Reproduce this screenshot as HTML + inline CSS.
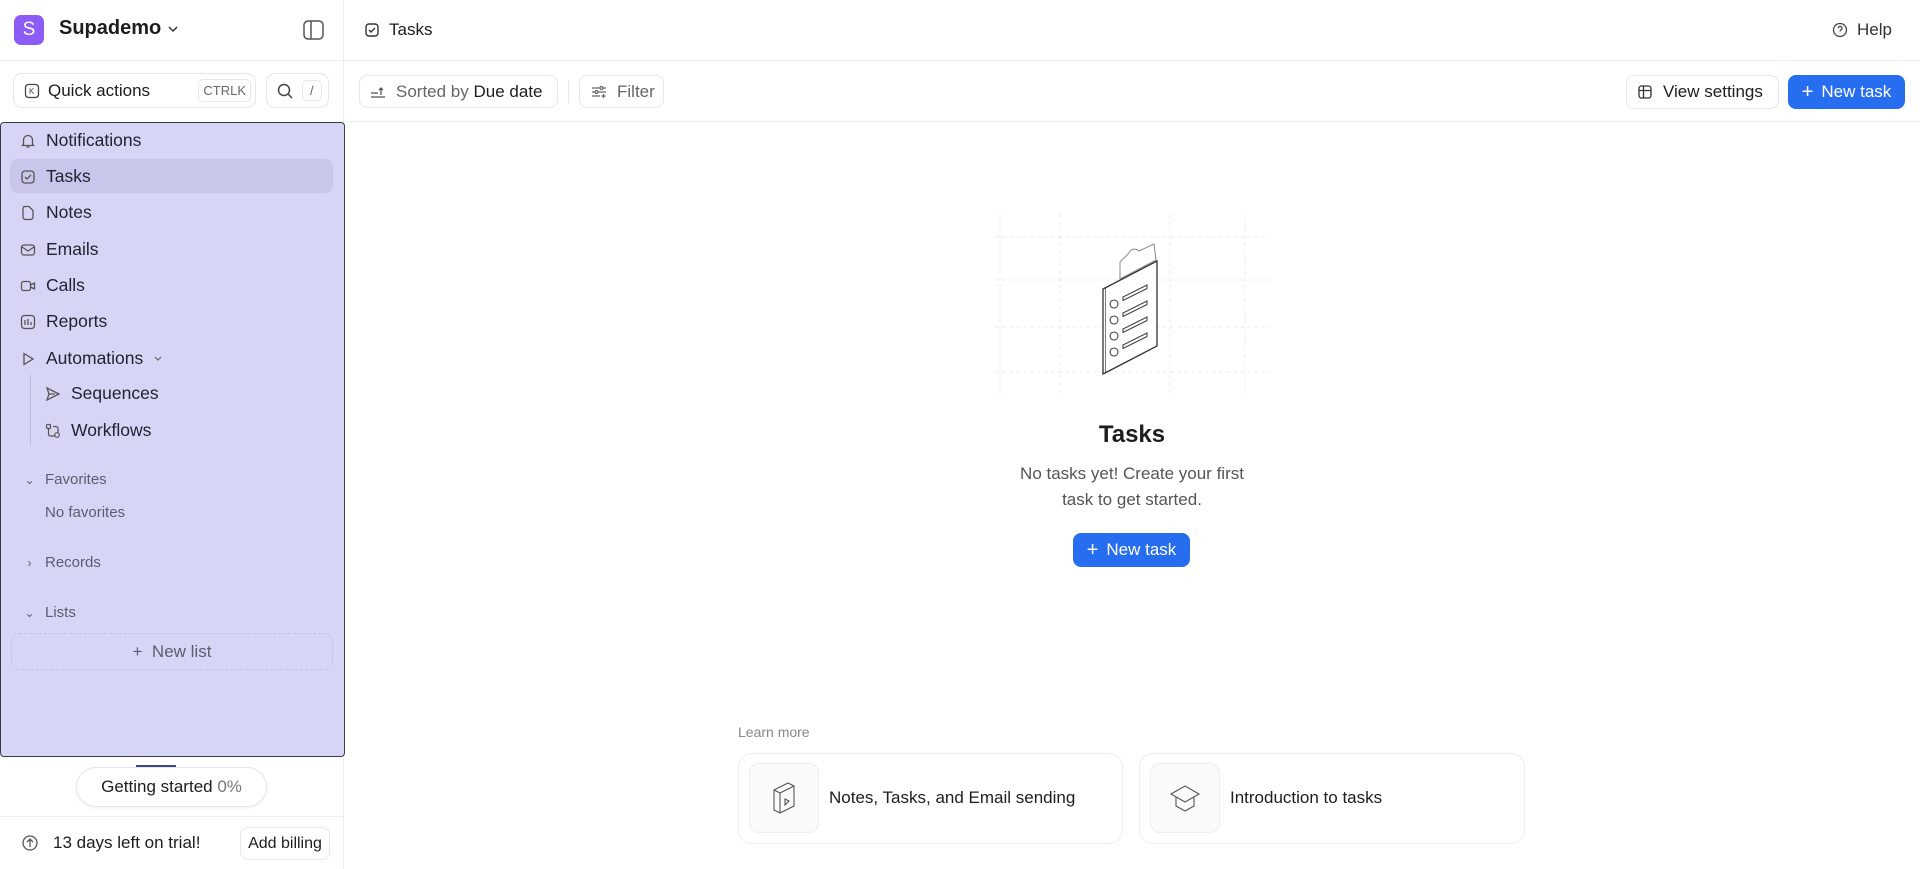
<!DOCTYPE html>
<html><head><meta charset="utf-8"><style>
*{box-sizing:border-box;margin:0;padding:0}
body{width:1920px;height:869px;overflow:hidden;background:#fff;font-family:"Liberation Sans",sans-serif;color:#1c1d1f;position:relative}
.a{position:absolute}
svg{display:block}
.nav{position:absolute;left:20px;font-size:17.5px;color:#1f2230;display:flex;align-items:center;gap:10px}
.sec{position:absolute;left:22px;font-size:15px;color:#5b5e70;display:flex;align-items:center;gap:8px}
.sec i{font-style:normal;width:15px;text-align:center;font-size:12px}
.btn{position:absolute;border:1px solid #e6e7ea;border-radius:8px;display:flex;align-items:center;gap:8px;font-size:17px}
</style></head><body>
<div class="a" style="left:0;top:0;width:344px;height:869px;border-right:1px solid #ececee;background:#fff"></div>
<div class="a" style="left:0;top:60px;width:344px;height:1px;background:#efeff1"></div>
<div class="a" style="left:14px;top:15px;width:30px;height:30px;border-radius:7px;background:#8b5cf6;color:#fff;font-size:19px;text-align:center;line-height:30px">S</div>
<div class="a" style="left:59px;top:17px;font-size:20px;font-weight:bold;color:#1c1d1f">Supademo</div>
<svg class="a" style="left:167px;top:25px" width="12" height="8" viewBox="0 0 12 8" fill="none" stroke="#333" stroke-width="1.5"><path d="M2 2l4 4 4-4"/></svg>
<svg class="a" style="left:303px;top:20px" width="21" height="20" viewBox="0 0 21 20"><rect x="1" y="1" width="19" height="18" rx="4" fill="none" stroke="#555" stroke-width="1.5"/><line x1="8" y1="1" x2="8" y2="19" stroke="#555" stroke-width="1.5"/></svg>
<div class="btn" style="left:13px;top:73px;width:243px;height:35px;padding-left:10px;border-radius:9px">
<svg width="16" height="16" viewBox="0 0 16 16"><rect x="1.5" y="1.5" width="13" height="13" rx="3" fill="none" stroke="#444" stroke-width="1.3"/><text x="5" y="11" font-size="8" fill="#444">K</text></svg>
<span style="font-size:17px">Quick actions</span>
<span style="margin-left:auto;margin-right:4px;border:1px solid #e6e7ea;border-radius:5px;font-size:13px;color:#666;padding:3px 4px">CTRLK</span></div>
<div class="btn" style="left:266px;top:73px;width:63px;height:35px;padding-left:9px;border-radius:9px">
<svg width="18" height="18" viewBox="0 0 18 18"><circle cx="8" cy="8" r="5.5" fill="none" stroke="#444" stroke-width="1.5"/><line x1="12" y1="12" x2="16" y2="16" stroke="#444" stroke-width="1.5"/></svg>
<span style="border:1px solid #e6e7ea;border-radius:5px;font-size:13px;color:#666;padding:2px 7px">/</span></div>
<div class="a" style="left:0;top:122px;width:345px;height:635px;background:#d7d5f5;border:1px solid #3a3a4a;border-radius:4px"></div>
<div class="a" style="left:10px;top:159px;width:323px;height:34px;border-radius:8px;background:#c8c6ea"></div>
<div class="nav" style="top:130px"><svg width="16" height="16" viewBox="0 0 16 16" fill="none" stroke="#555" stroke-width="1.3"><path d="M3.5 11.5V7a4.5 4.5 0 019 0v4.5l1 1h-11z M6.5 14h3"/></svg>Notifications</div>
<div class="nav" style="top:166px"><svg width="16" height="16" viewBox="0 0 16 16" fill="none" stroke="#555" stroke-width="1.3"><rect x="2" y="2" width="12" height="12" rx="3"/><path d="M5 8l2 2 4-4"/></svg>Tasks</div>
<div class="nav" style="top:202px"><svg width="16" height="16" viewBox="0 0 16 16" fill="none" stroke="#555" stroke-width="1.3"><path d="M4 1.5h5l4 4V12a2.5 2.5 0 01-2.5 2.5h-5A2.5 2.5 0 013 12V3.5z"/></svg>Notes</div>
<div class="nav" style="top:239px"><svg width="16" height="16" viewBox="0 0 16 16" fill="none" stroke="#555" stroke-width="1.3"><rect x="1.5" y="3" width="13" height="10" rx="2.5"/><path d="M2 5l6 4 6-4"/></svg>Emails</div>
<div class="nav" style="top:275px"><svg width="16" height="16" viewBox="0 0 16 16" fill="none" stroke="#555" stroke-width="1.3"><rect x="1.5" y="3.5" width="9" height="9" rx="2"/><path d="M10.5 7l4-2v6l-4-2"/></svg>Calls</div>
<div class="nav" style="top:311px"><svg width="16" height="16" viewBox="0 0 16 16" fill="none" stroke="#555" stroke-width="1.3"><rect x="1.5" y="1.5" width="13" height="13" rx="3"/><path d="M5 11V6M8 11V5M11 11V8"/></svg>Reports</div>
<div class="nav" style="top:348px"><svg width="16" height="16" viewBox="0 0 16 16" fill="none" stroke="#555" stroke-width="1.3"><path d="M4 2.5l9 5.5-9 5.5z"/></svg>Automations <svg width="10" height="7" viewBox="0 0 10 7" fill="none" stroke="#666" stroke-width="1.2"><path d="M2 2l3 3 3-3"/></svg></div>
<div class="a" style="left:30px;top:375px;width:1px;height:70px;background:#b8b6dc"></div>
<div class="nav" style="left:45px;top:383px"><svg width="16" height="16" viewBox="0 0 16 16" fill="none" stroke="#555" stroke-width="1.3"><path d="M2 2l12 6-12 6 2-6z M4 8h6"/></svg>Sequences</div>
<div class="nav" style="left:45px;top:420px"><svg width="16" height="16" viewBox="0 0 16 16" fill="none" stroke="#555" stroke-width="1.2"><rect x="1.5" y="1.5" width="4" height="4" rx="1"/><circle cx="12" cy="12" r="2.3"/><path d="M3.5 6v5a2 2 0 002 2h4M8 3.5h3a2 2 0 012 2v4"/></svg>Workflows</div>
<div class="sec" style="top:471px"><i>&#8964;</i>Favorites</div>
<div class="a" style="left:45px;top:504px;font-size:15px;color:#5b5e70">No favorites</div>
<div class="sec" style="top:554px"><i>&#8250;</i>Records</div>
<div class="sec" style="top:604px"><i>&#8964;</i>Lists</div>
<div class="a" style="left:11px;top:633px;width:322px;height:37px;border:1px dashed #c4c2e4;border-radius:8px;font-size:17px;color:#5b5e70;text-align:center;line-height:35px">+&nbsp; New list</div>
<div class="a" style="left:136px;top:765px;width:40px;height:2px;background:#3b4a8a"></div>
<div class="a" style="left:76px;top:767px;width:191px;height:40px;border:1px solid #e6e7ea;border-radius:20px;font-size:17px;text-align:center;line-height:38px;box-shadow:0 1px 3px rgba(0,0,0,.06)">Getting started <span style="color:#777">0%</span></div>
<div class="a" style="left:0;top:816px;width:344px;height:1px;background:#efeff1"></div>
<div class="a" style="left:15px;top:828px;width:30px;height:30px;display:flex;align-items:center;justify-content:center"><svg width="18" height="18" viewBox="0 0 18 18" fill="none" stroke="#555" stroke-width="1.3"><circle cx="9" cy="9" r="7"/><path d="M9 13V5M6 8l3-3 3 3"/></svg></div>
<div class="a" style="left:53px;top:833px;font-size:17px">13 days left on trial!</div>
<div class="btn" style="left:240px;top:827px;width:90px;height:33px;justify-content:center;font-size:16px">Add billing</div>
<div class="a" style="left:344px;top:60px;width:1576px;height:1px;background:#efeff1"></div>
<svg class="a" style="left:364px;top:22px" width="16" height="16" viewBox="0 0 16 16" fill="none" stroke="#333" stroke-width="1.4"><rect x="2" y="2" width="12" height="12" rx="3"/><path d="M5 8l2 2 4-4"/></svg>
<div class="a" style="left:389px;top:20px;font-size:17px">Tasks</div>
<svg class="a" style="left:1832px;top:22px" width="16" height="16" viewBox="0 0 16 16" fill="none" stroke="#444" stroke-width="1.3"><circle cx="8" cy="8" r="6.5"/><path d="M6.2 6.3a1.9 1.9 0 113 1.5c-.7.4-1.2.8-1.2 1.6M8 11.3v.2"/></svg>
<div class="a" style="left:1857px;top:20px;font-size:17px;color:#333">Help</div>
<div class="btn" style="left:359px;top:75px;width:199px;height:33px;padding-left:10px;gap:10px"><svg width="16" height="16" viewBox="0 0 16 16" fill="none" stroke="#555" stroke-width="1.3"><path d="M1 13h14M1 9h7M11 11V4M9 6l2-2 2 2"/></svg><span style="color:#666">Sorted by <span style="color:#1c1d1f">Due date</span></span></div>
<div class="a" style="left:568px;top:80px;width:1px;height:23px;background:#e6e7ea"></div>
<div class="btn" style="left:579px;top:75px;width:85px;height:33px;padding-left:11px;gap:10px;color:#666"><svg width="16" height="16" viewBox="0 0 16 16" fill="none" stroke="#666" stroke-width="1.2"><path d="M1 4h8M12 4h3M1 8h3M7 8h8M1 12h8"/><circle cx="10.5" cy="4" r="1.5"/><circle cx="5.5" cy="8" r="1.5"/><path d="M12.5 10v4M10.5 12h4"/></svg>Filter</div>
<div class="btn" style="left:1626px;top:75px;width:153px;height:34px;padding-left:10px;gap:10px"><svg width="16" height="16" viewBox="0 0 16 16" fill="none" stroke="#333" stroke-width="1.3"><rect x="2" y="2" width="12" height="12" rx="2.5"/><path d="M2 6.5h12M6.5 2v12"/></svg>View settings</div>
<div class="a" style="left:1788px;top:75px;width:117px;height:34px;border-radius:8px;background:#266df0;color:#fff;font-size:17px;display:flex;align-items:center;justify-content:center;gap:8px"><span style="font-size:20px;font-weight:300">+</span>New task</div>
<div class="a" style="left:344px;top:121px;width:1576px;height:1px;background:#efeff1"></div>
<svg class="a" style="left:995px;top:212px" width="280" height="184" viewBox="0 0 280 184" fill="none">
<g stroke="#ececee" stroke-width="1" stroke-dasharray="4 3"><path d="M5 2v180M65 2v180M175 2v180M250 2v180M0 25h275M0 68h275M0 115h275M0 160h275"/></g>
<g stroke="#333" stroke-width="1.3" fill="#fff"><path d="M110 76l52-27v85l-52 27z"/><path d="M110 76l-2 1v85l2-1"/></g>
<path d="M125 50c4-5 8-6 10-11 3-3 7-2 9 0l15-7 2 16-36 19z" stroke="#888" stroke-width="1" fill="#fff"/>
<g stroke="#444" stroke-width="1.1"><circle cx="119" cy="92" r="4"/><circle cx="119" cy="108" r="4"/><circle cx="119" cy="124" r="4"/><circle cx="119" cy="140" r="4"/>
<path d="M128 85l24-12v3.5l-24 12zM128 101l24-12v3.5l-24 12zM128 117l24-12v3.5l-24 12zM128 133l24-12v3.5l-24 12z"/></g>
</svg>
<div class="a" style="left:1000px;top:421px;width:264px;text-align:center;font-size:24px;font-weight:bold">Tasks</div>
<div class="a" style="left:960px;top:461px;width:344px;text-align:center;font-size:17px;color:#555;line-height:26px">No tasks yet! Create your first<br>task to get started.</div>
<div class="a" style="left:1073px;top:533px;width:117px;height:34px;border-radius:8px;background:#266df0;color:#fff;font-size:17px;display:flex;align-items:center;justify-content:center;gap:8px"><span style="font-size:20px;font-weight:300">+</span>New task</div>
<div class="a" style="left:738px;top:724px;font-size:14px;color:#888">Learn more</div>
<div class="a" style="left:738px;top:753px;width:385px;height:91px;border:1px solid #eeeef0;border-radius:14px"></div>
<div class="a" style="left:749px;top:763px;width:70px;height:70px;border:1px solid #eeeef0;border-radius:10px;background:#fafafa"></div>
<svg class="a" style="left:766px;top:780px" width="36" height="36" viewBox="0 0 36 36" fill="none" stroke="#555" stroke-width="1.1"><path d="M8 10l14-7 6 3v20l-14 7-6-3z M14 13l14-7M14 13v20M8 10l6 3"/><path d="M19 19l4 2-4 4z"/></svg>
<div class="a" style="left:829px;top:788px;font-size:17px">Notes, Tasks, and Email sending</div>
<div class="a" style="left:1139px;top:753px;width:386px;height:91px;border:1px solid #eeeef0;border-radius:14px"></div>
<div class="a" style="left:1150px;top:763px;width:70px;height:70px;border:1px solid #eeeef0;border-radius:10px;background:#fafafa"></div>
<svg class="a" style="left:1167px;top:780px" width="36" height="36" viewBox="0 0 36 36" fill="none" stroke="#555" stroke-width="1.1"><path d="M4 14l14-8 14 8-14 8z M9 17v9l9 5 9-5v-9"/></svg>
<div class="a" style="left:1230px;top:788px;font-size:17px">Introduction to tasks</div>
</body></html>
